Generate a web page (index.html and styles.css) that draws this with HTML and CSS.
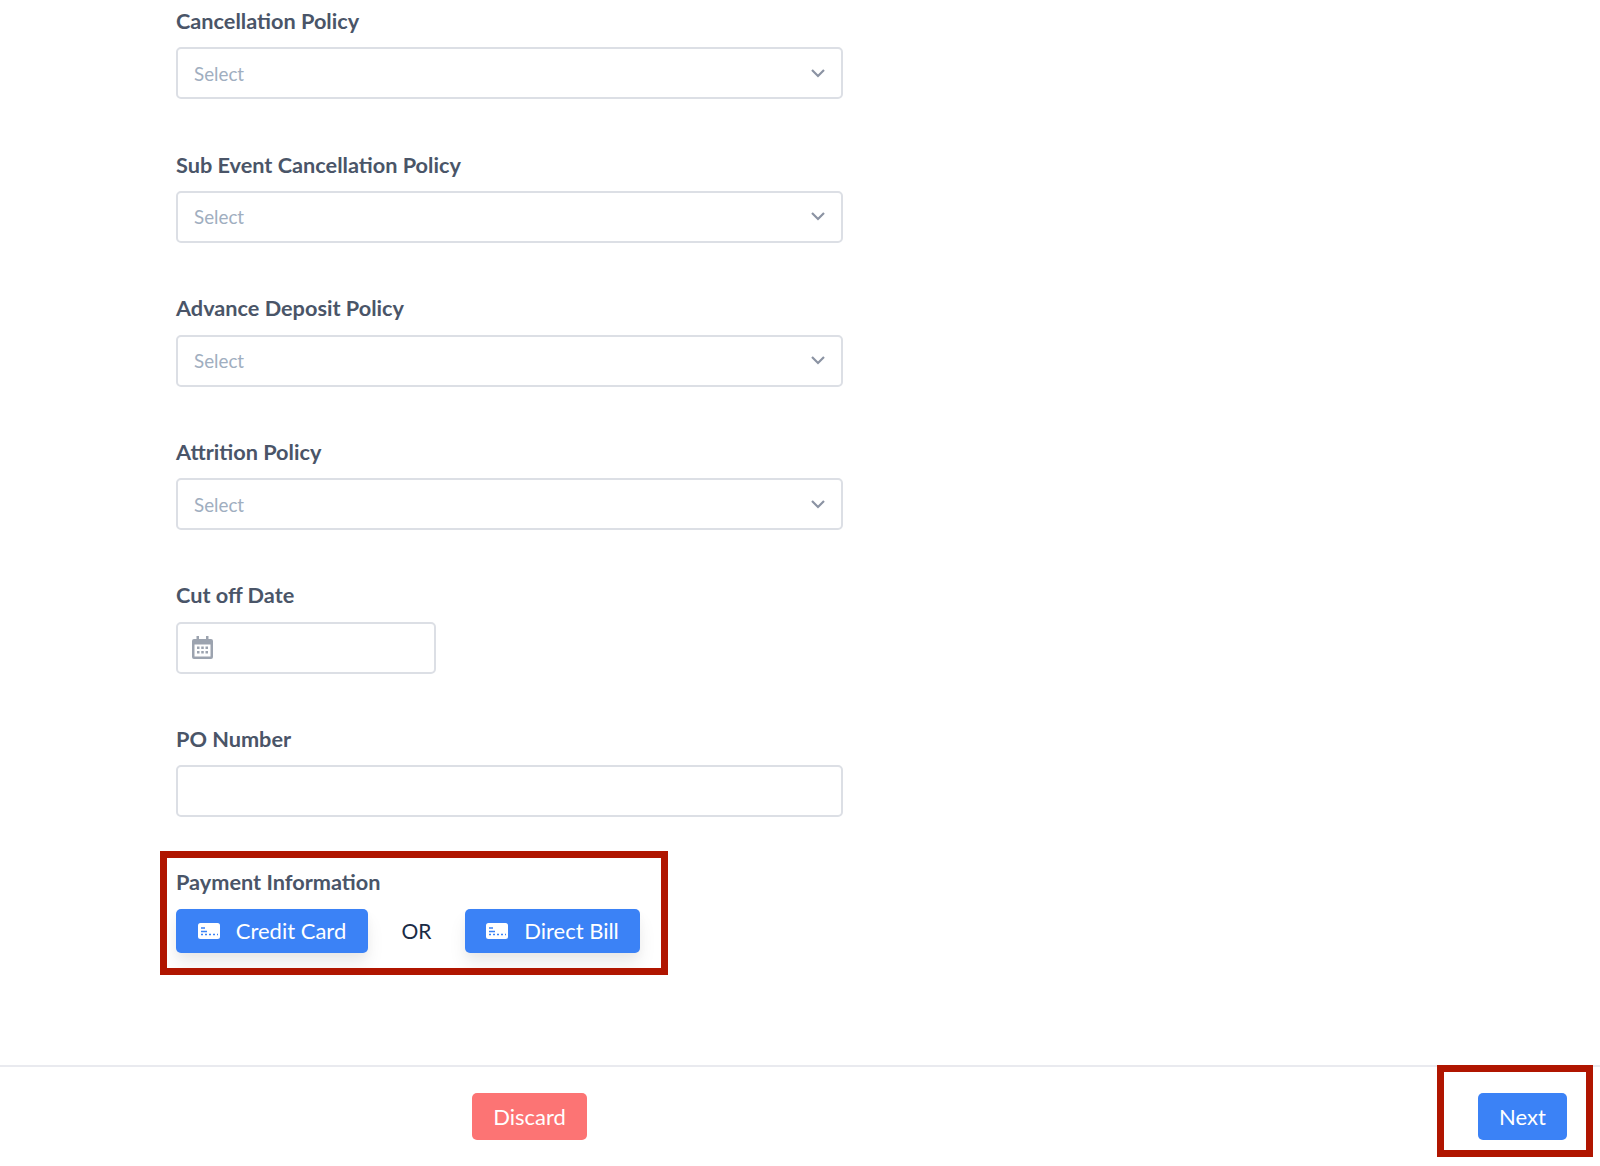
FILE: index.html
```html
<!DOCTYPE html>
<html lang="en">
<head>
<meta charset="utf-8">
<title>Event details</title>
<link rel="stylesheet" href="styles.css">
</head>
<body>
<svg class="defs" width="0" height="0" aria-hidden="true">
  <symbol id="chev" viewBox="0 0 14 9"><path d="M1 1l6 6 6-6" fill="none" stroke="currentColor" stroke-width="2.2"/></symbol>
  <symbol id="card" viewBox="0 0 22 16">
    <rect width="22" height="16" rx="2.5" fill="#fff"/>
    <path d="M3 5h4M3 8.500h6M3 11.500h2M7 11.500h2M11 11.500h2M15 11.500h2M19 11.500h1" stroke="#3b82f6" stroke-width="1.400" fill="none"/>
  </symbol>
</svg>
<main class="form">
  <div class="field">
    <label class="label">Cancellation Policy</label>
    <div class="control select"><span class="placeholder">Select</span><svg class="chevron"><use href="#chev"/></svg></div>
  </div>
  <div class="field">
    <label class="label">Sub Event Cancellation Policy</label>
    <div class="control select"><span class="placeholder">Select</span><svg class="chevron"><use href="#chev"/></svg></div>
  </div>
  <div class="field">
    <label class="label">Advance Deposit Policy</label>
    <div class="control select"><span class="placeholder">Select</span><svg class="chevron"><use href="#chev"/></svg></div>
  </div>
  <div class="field">
    <label class="label">Attrition Policy</label>
    <div class="control select"><span class="placeholder">Select</span><svg class="chevron"><use href="#chev"/></svg></div>
  </div>
  <div class="field">
    <label class="label">Cut off Date</label>
    <div class="control date">
      <svg class="calendar" viewBox="0 0 21 23">
        <path d="M4.500 0h2.500v3h7V0h2.500v3h2.500a2 2 0 0 1 2 2v16a2 2 0 0 1-2 2H2a2 2 0 0 1-2-2V5a2 2 0 0 1 2-2h2.500z" fill="#9ca3af"/>
        <rect x="2.500" y="8.500" width="16" height="12" fill="#fff"/>
        <path d="M5 10.500h2.500v2.500H5zM9.250 10.500h2.500v2.500h-2.500zM13.500 10.500H16v2.500h-2.500zM5 15h2.500v2.500H5zM9.250 15h2.500v2.500h-2.500zM13.500 15H16v2.500h-2.500z" fill="#9ca3af"/>
      </svg>
    </div>
  </div>
  <div class="field">
    <label class="label">PO Number</label>
    <div class="control"></div>
  </div>
  <section class="payment">
    <span class="frame frame-payment"></span>
    <div class="label">Payment Information</div>
    <div class="pay-row">
      <button class="btn btn-blue btn-pay btn-credit"><svg class="card"><use href="#card"/></svg>Credit Card</button>
      <span class="or">OR</span>
      <button class="btn btn-blue btn-pay btn-direct"><svg class="card"><use href="#card"/></svg>Direct Bill</button>
    </div>
  </section>
</main>
<footer class="footer">
  <button class="btn btn-red btn-foot">Discard</button>
  <div class="next-wrap">
    <span class="frame frame-next"></span>
    <button class="btn btn-blue btn-foot">Next</button>
  </div>
</footer>
</body>
</html>
```

FILE: styles.css
```css
* { box-sizing: border-box; }
html, body { margin: 0; height: 100%; }
body {
  width: 1600px;
  height: 1166px;
  overflow: hidden;
  background: #fff;
  font-family: Lato, "Open Sans", sans-serif;
  color: #4a5568;
  display: flex;
  flex-direction: column;
}
.defs { position: absolute; }
.form {
  flex: 1;
  padding: 7px 0 0 176px;
  display: flex;
  flex-direction: column;
}
.field { width: 667px; margin-bottom: 51.2px; }
.label {
  display: block;
  font-size: 21.7px;
  font-weight: 700;
  line-height: 28px;
  color: #4a5568;
  margin-bottom: 12.4px;
}
.control {
  height: 52px;
  width: 667px;
  background: #fff;
  border: 2px solid #dcdfe5;
  border-radius: 5px;
  display: flex;
  align-items: center;
  padding: 0 16px;
}
.select { justify-content: space-between; }
.placeholder { font-size: 18.8px; color: #a0aec0; }
.chevron { width: 14px; height: 9px; color: #8b93a3; }
.date { width: 260px; padding-left: 14px; }
.calendar { width: 21px; height: 23px; }
.payment { position: relative; width: 492px; }
.pay-row { display: flex; align-items: center; }
.btn {
  border: 0;
  border-radius: 5px;
  color: #fff;
  font-family: inherit;
  font-size: 22px;
  cursor: pointer;
  padding: 0;
}
.btn-blue { background: #3b82f6; }
.btn-red { background: #fc7474; }
.btn-pay {
  height: 44px;
  display: flex;
  align-items: center;
  justify-content: center;
  gap: 16px;
  box-shadow: 0 12px 18px rgba(0,0,0,.07), 0 4px 8px rgba(0,0,0,.03);
}
.btn-credit { width: 192px; }
.btn-direct { width: 175px; }
.card { width: 22px; height: 16px; }
.or { width: 97px; text-align: center; font-size: 21px; color: #1a2b45; }
.footer {
  flex: none;
  height: 101px;
  border-top: 2px solid #e9eaef;
  display: flex;
  align-items: flex-start;
  padding: 26px 33px 0 472px;
  justify-content: space-between;
}
.btn-foot { height: 47px; }
.btn-red { width: 115px; }
.next-wrap { position: relative; }
.next-wrap .btn { width: 89px; display: block; }
.frame { position: absolute; border: 7px solid #b01500; pointer-events: none; }
.frame-payment { left: -16px; top: -17px; width: 508px; height: 124px; }
.frame-next { left: -41px; top: -28px; width: 156px; height: 92px; }
```
